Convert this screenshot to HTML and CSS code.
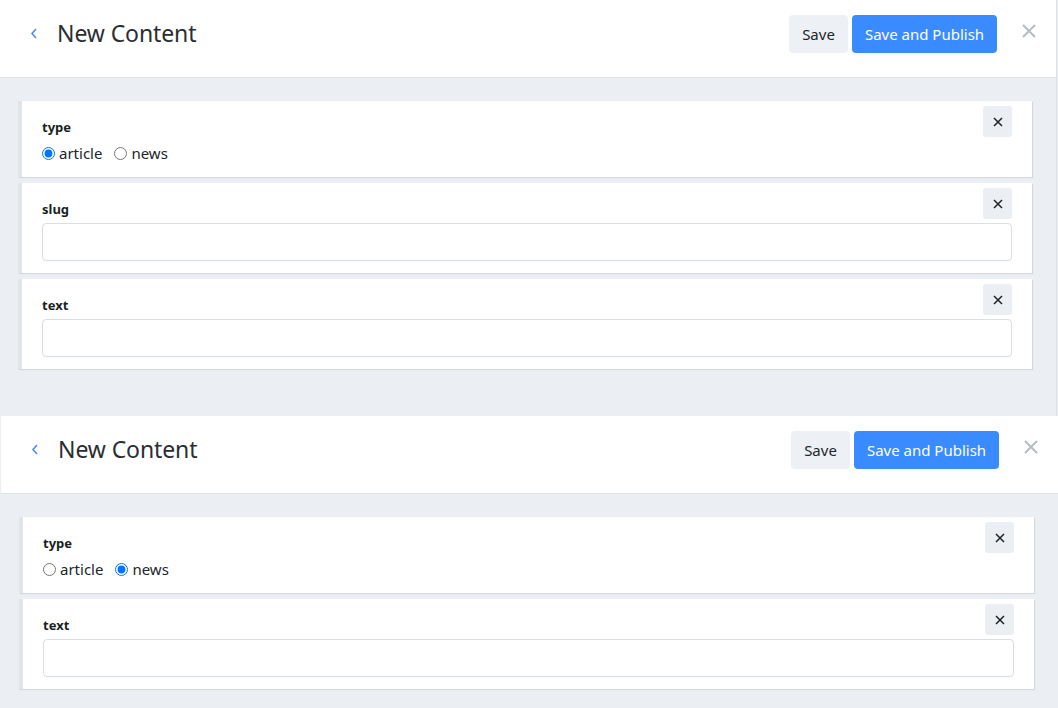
FILE: index.html
```html
<!DOCTYPE html>
<html>
<head>
<meta charset="utf-8">
<link rel="stylesheet" href="styles.css">
</head>
<body>
<div class="shot shot-top">
  <header class="topbar">
    <a class="back" href="#"><svg width="8" height="11" viewBox="0 0 8 11"><polyline points="6,1 2,5.5 6,10" fill="none" stroke="#4d8dff" stroke-width="1.6"/></svg></a>
    <h1 class="title">New Content</h1>
    <div class="actions">
      <button class="btn btn-light">Save</button>
      <button class="btn btn-primary">Save and Publish</button>
      <button class="close-main" aria-label="close"><svg width="14" height="14" viewBox="0 0 14 14"><path d="M1 1L13 13M13 1L1 13" stroke="#b4bcc4" stroke-width="2"/></svg></button>
    </div>
  </header>
  <main class="body">
    <section class="card">
      <button class="remove" aria-label="remove"><svg width="10" height="10" viewBox="0 0 10 10"><path d="M1 1L9 9M9 1L1 9" stroke="#1d2227" stroke-width="1.5"/></svg></button>
      <div class="label">type</div>
      <div class="radios">
        <label class="radio"><input type="radio" name="t1" checked> article</label>
        <label class="radio"><input type="radio" name="t1"> news</label>
      </div>
    </section>
    <section class="card">
      <button class="remove" aria-label="remove"><svg width="10" height="10" viewBox="0 0 10 10"><path d="M1 1L9 9M9 1L1 9" stroke="#1d2227" stroke-width="1.5"/></svg></button>
      <div class="label">slug</div>
      <input class="field" type="text">
    </section>
    <section class="card">
      <button class="remove" aria-label="remove"><svg width="10" height="10" viewBox="0 0 10 10"><path d="M1 1L9 9M9 1L1 9" stroke="#1d2227" stroke-width="1.5"/></svg></button>
      <div class="label">text</div>
      <input class="field" type="text">
    </section>
  </main>
</div>
<div class="shot shot-bottom">
  <header class="topbar">
    <a class="back" href="#"><svg width="8" height="11" viewBox="0 0 8 11"><polyline points="6,1 2,5.5 6,10" fill="none" stroke="#4d8dff" stroke-width="1.6"/></svg></a>
    <h1 class="title">New Content</h1>
    <div class="actions">
      <button class="btn btn-light">Save</button>
      <button class="btn btn-primary">Save and Publish</button>
      <button class="close-main" aria-label="close"><svg width="14" height="14" viewBox="0 0 14 14"><path d="M1 1L13 13M13 1L1 13" stroke="#b4bcc4" stroke-width="2"/></svg></button>
    </div>
  </header>
  <main class="body">
    <section class="card">
      <button class="remove" aria-label="remove"><svg width="10" height="10" viewBox="0 0 10 10"><path d="M1 1L9 9M9 1L1 9" stroke="#1d2227" stroke-width="1.5"/></svg></button>
      <div class="label">type</div>
      <div class="radios">
        <label class="radio"><input type="radio" name="t2"> article</label>
        <label class="radio"><input type="radio" name="t2" checked> news</label>
      </div>
    </section>
    <section class="card">
      <button class="remove" aria-label="remove"><svg width="10" height="10" viewBox="0 0 10 10"><path d="M1 1L9 9M9 1L1 9" stroke="#1d2227" stroke-width="1.5"/></svg></button>
      <div class="label">text</div>
      <input class="field" type="text">
    </section>
  </main>
</div>
</body>
</html>
```

FILE: styles.css
```css
html, body {
  margin: 0;
  padding: 0;
  background: #ebeef2;
  overflow: hidden;
}
body {
  font-family: "Noto Sans", "Open Sans", sans-serif;
  color: #212529;
  height: 708px;
}
.shot {
  width: 1056px;
  background: #ebeef2;
}
.shot-top {
  border-right: 1px solid #dde1e6;
  height: 416px;
}
.shot-bottom {
  margin-left: 1px;
  width: 1057px;
}
.topbar {
  height: 78px;
  box-sizing: border-box;
  background: #fff;
  border-bottom: 1px solid #dfe3e7;
  display: flex;
  align-items: flex-start;
  padding: 15px 20px 0 30px;
}
.back {
  display: flex;
  align-items: center;
  width: 8px;
  height: 11px;
  margin-top: 13px;
}
.title {
  margin: 0 0 0 19px;
  font-size: 23px;
  line-height: 36px;
  font-weight: 400;
  color: #2a2e33;
  letter-spacing: -0.1px;
  flex: 1;
}
.actions {
  display: flex;
  align-items: center;
}
.btn {
  height: 38px;
  border: none;
  border-radius: 4px;
  font-family: inherit;
  font-size: 15px;
  padding: 0;
}
.btn-light {
  background: #edf1f5;
  color: #212529;
  width: 59px;
}
.btn-primary {
  margin-left: 4px;
  background: #3a8bff;
  color: #fff;
  width: 145px;
}
.close-main {
  margin-left: 25px;
  background: none;
  border: none;
  padding: 0;
  width: 14px;
  height: 14px;
  display: flex;
  margin-top: -6px;
}
.body {
  padding: 23px 24px 46px 18px;
  display: flex;
  flex-direction: column;
  gap: 6px;
}
.card {
  position: relative;
  background: #fff;
  border-left: 4px solid #e1e5e9;
  box-shadow: 1px 1px 1px rgba(0, 0, 0, 0.09);
  padding: 17px 20px 12px 20px;
}
.remove {
  position: absolute;
  top: 5px;
  right: 20px;
  width: 29px;
  height: 31px;
  border: none;
  border-radius: 3px;
  background: #ebeff3;
  display: flex;
  align-items: center;
  justify-content: center;
  padding: 0;
}
.label {
  font-size: 13px;
  font-weight: 700;
  line-height: 18px;
  color: #1b1f23;
}
.radios {
  display: flex;
  gap: 12px;
  margin-top: 7px;
  margin-bottom: 2px;
  font-size: 15px;
  line-height: 20px;
}
.radio {
  display: flex;
  align-items: center;
  gap: 4px;
}
.radio input {
  margin: 0;
  width: 13px;
  height: 13px;
}
.field {
  display: block;
  box-sizing: border-box;
  width: 100%;
  height: 38px;
  margin-top: 5px;
  border: 1px solid #d6dee8;
  border-radius: 4px;
  background: #fff;
}
```
